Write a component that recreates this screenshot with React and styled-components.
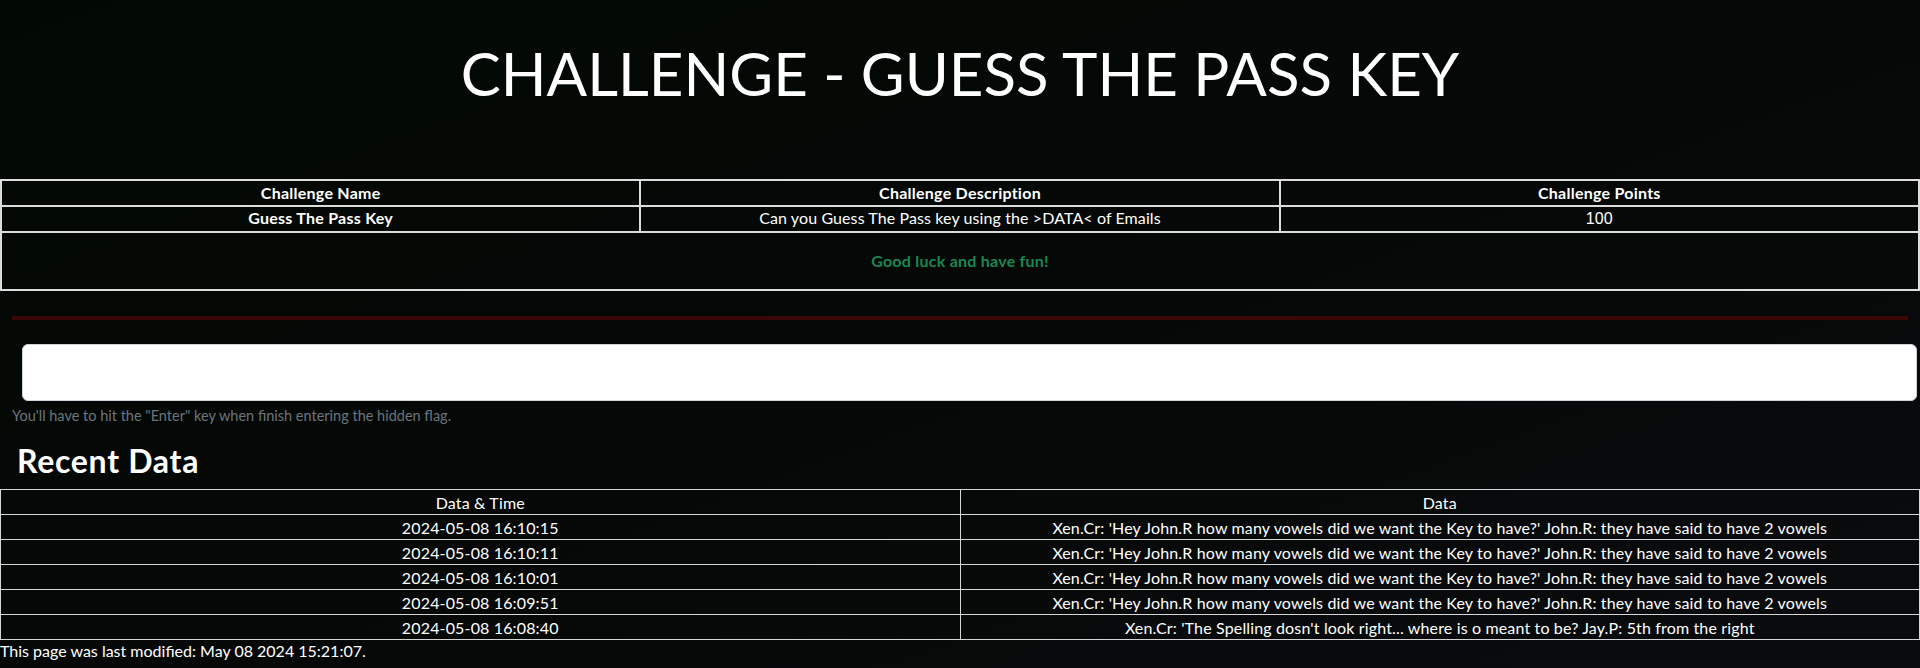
import React from 'react';
import styled, { createGlobalStyle } from 'styled-components';

const GlobalStyle = createGlobalStyle`
  html, body {
    margin: 0;
    padding: 0;
  }
  body {
    min-height: 100vh;
    background: linear-gradient(160deg, #020904 0%, #050806 45%, #0a0b0e 100%);
    color: #fff;
    font-family: Lato, "Open Sans", sans-serif;
    font-size: 16px;
  }
`;

const Header = styled.header`
  box-sizing: border-box;
  height: 179px;
  padding-top: 37px;
  text-align: center;
`;

const Title = styled.h1`
  margin: 0;
  font-size: 60px;
  font-weight: 400;
  line-height: 72px;
  color: #fff;
`;

const ChallengeTable = styled.table`
  width: 100%;
  border-collapse: collapse;
  table-layout: fixed;
`;

const HeadCell = styled.th`
  border: 2px solid #dcdcdc;
  height: 24px;
  padding: 0;
  line-height: 22px;
  font-weight: 700;
  letter-spacing: 0.25px;
  text-align: center;
`;

const Cell = styled.td`
  border: 2px solid #dcdcdc;
  height: ${p => p.$tall ? '56px' : '24px'};
  padding: 0;
  line-height: 22px;
  text-align: center;
  vertical-align: ${p => p.$tall ? 'middle' : 'baseline'};
  font-weight: ${p => p.$bold ? 700 : 400};
  letter-spacing: ${p => p.$bold ? '0.25px' : '0.1px'};
  font-family: ${p => p.$arial ? '"Liberation Sans", Arial, sans-serif' : 'inherit'};
  color: ${p => p.$green ? '#198754' : '#fff'};
`;

const Divider = styled.hr`
  margin: 25px 12px 0;
  height: 4px;
  border: 0;
  background: #3a0606;
`;

const FlagForm = styled.form`
  margin: 0;
  padding: 24px 3px 0 22px;
`;

const FlagInput = styled.input`
  display: block;
  box-sizing: border-box;
  width: 100%;
  height: 57px;
  border: 1px solid #ced4da;
  border-radius: 6px;
  background: #fff;
  font-size: 16px;
  outline: none;
`;

const Hint = styled.div`
  margin: 6px 0 0 12px;
  font-size: 14.5px;
  color: #6c757d;
`;

const SectionTitle = styled.h2`
  margin: 18px 0 0 17px;
  font-size: 32px;
  font-weight: 700;
  letter-spacing: 0.7px;
  line-height: 38px;
`;

const DataTable = styled.table`
  width: 100%;
  margin-top: 9px;
  border-collapse: collapse;
  table-layout: fixed;
`;

const DataCell = styled.td`
  border: 1px solid #d6d6d6;
  height: 24px;
  padding: 0;
  text-align: center;
  font-weight: 400;
  letter-spacing: 0.15px;
`;

const Footer = styled.p`
  margin: 0;
  line-height: 22px;
`;

const rows = [
  ['2024-05-08 16:10:15', "Xen.Cr: 'Hey John.R how many vowels did we want the Key to have?' John.R: they have said to have 2 vowels"],
  ['2024-05-08 16:10:11', "Xen.Cr: 'Hey John.R how many vowels did we want the Key to have?' John.R: they have said to have 2 vowels"],
  ['2024-05-08 16:10:01', "Xen.Cr: 'Hey John.R how many vowels did we want the Key to have?' John.R: they have said to have 2 vowels"],
  ['2024-05-08 16:09:51', "Xen.Cr: 'Hey John.R how many vowels did we want the Key to have?' John.R: they have said to have 2 vowels"],
  ['2024-05-08 16:08:40', "Xen.Cr: 'The Spelling dosn't look right... where is o meant to be? Jay.P: 5th from the right"],
];

export default function App() {
  return (
    <>
      <GlobalStyle />
      <Header>
        <Title>CHALLENGE - GUESS THE PASS KEY</Title>
      </Header>
      <ChallengeTable>
        <thead>
          <tr>
            <HeadCell>Challenge Name</HeadCell>
            <HeadCell>Challenge Description</HeadCell>
            <HeadCell>Challenge Points</HeadCell>
          </tr>
        </thead>
        <tbody>
          <tr>
            <Cell $bold>Guess The Pass Key</Cell>
            <Cell>Can you Guess The Pass key using the &gt;DATA&lt; of Emails</Cell>
            <Cell $arial>100</Cell>
          </tr>
          <tr>
            <Cell colSpan={3} $tall $bold $green>Good luck and have fun!</Cell>
          </tr>
        </tbody>
      </ChallengeTable>
      <Divider />
      <FlagForm onSubmit={e => e.preventDefault()}>
        <FlagInput type="text" name="flag" />
      </FlagForm>
      <Hint>You'll have to hit the "Enter" key when finish entering the hidden flag.</Hint>
      <SectionTitle>Recent Data</SectionTitle>
      <DataTable>
        <thead>
          <tr>
            <DataCell as="th">Data &amp; Time</DataCell>
            <DataCell as="th">Data</DataCell>
          </tr>
        </thead>
        <tbody>
          {rows.map(([time, data], i) => (
            <tr key={i}>
              <DataCell>{time}</DataCell>
              <DataCell>{data}</DataCell>
            </tr>
          ))}
        </tbody>
      </DataTable>
      <Footer>This page was last modified: May 08 2024 15:21:07.</Footer>
    </>
  );
}
